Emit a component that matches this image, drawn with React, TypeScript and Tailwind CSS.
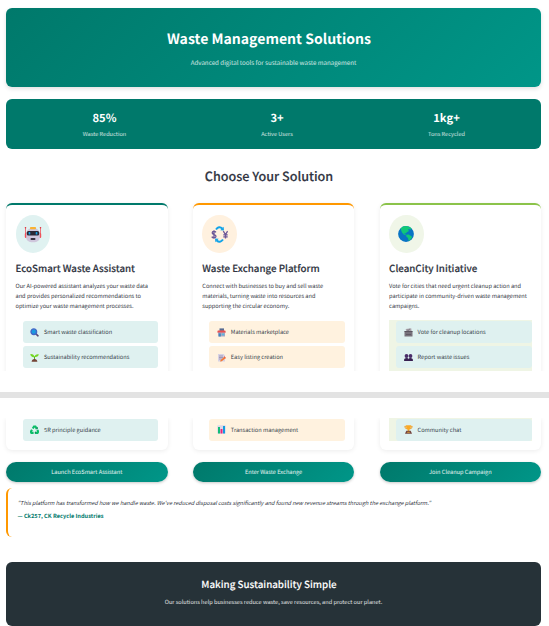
import type { ReactNode } from "react";

function Robot() {
  return (
    <svg viewBox="0 0 18 17" className="h-[17px] w-[18px]">
      <path d="M1.500 1v8M16.500 1v8" stroke="#f0525a" strokeWidth=".8" />
      <circle cx="1.500" cy="1.800" r=".8" fill="#d93a45" />
      <circle cx="16.500" cy="1.800" r=".8" fill="#d93a45" />
      <rect x="0.800" y="7" width="2.200" height="5" rx="1" fill="#f0525a" />
      <rect x="15" y="7" width="2.200" height="5" rx="1" fill="#f0525a" />
      <rect x="2.200" y="2.500" width="13.600" height="13.800" rx="5" fill="#cfc7dc" />
      <rect x="6" y="1" width="6" height="2.200" rx=".8" fill="#f9b233" />
      <rect x="2.800" y="5" width="12.400" height="4.600" rx="1.600" fill="#2b2834" />
      <rect x="4.600" y="6" width="1.700" height="2.600" rx=".7" fill="#12a2e6" />
      <rect x="11.700" y="6" width="1.700" height="2.600" rx=".7" fill="#12a2e6" />
      <rect x="6.500" y="12" width="5" height="2" rx=".9" fill="#37313f" />
    </svg>
  );
}

function Exchange() {
  return (
    <svg viewBox="0 0 17 17" className="h-[17px] w-[17px]" fill="none">
      <path d="M5 3.500Q8-.5 11.300 2.500" stroke="#11a3e8" strokeWidth="2" />
      <path d="M9.300 4.200 13 4.600 12.600.8z" fill="#11a3e8" />
      <path d="M12 13.500Q9 17.500 5.700 14.500" stroke="#11a3e8" strokeWidth="2" />
      <path d="M7.700 12.800 4 12.400l.4 3.800z" fill="#11a3e8" />
      <path d="M4.900 6.400C4.200 5 1.200 5 1.200 6.900c0 2 3.800 1.300 3.800 3.300 0 2-3.400 2-4.200.4M3 4.300v8.500" stroke="#6b5798" strokeWidth="1.300" />
      <path d="m12.300 5.200 2.200 3.400 2.100-3.400M14.500 8.500v4M12.300 8.900h4.400M12.300 10.900h4.400" stroke="#6b5798" strokeWidth="1.300" />
    </svg>
  );
}

function Globe() {
  return (
    <svg viewBox="0 0 16 16" className="h-4 w-4">
      <circle cx="8" cy="8" r="7.900" fill="#0874c4" />
      <path d="M2.700 2.200Q5-.2 8.500.1L12.700 1.600 13.500 3 12 3.700l-1-.9-.8 1 .8 1.200-2.200 1.200-.9 1.300L6.500 7l.2 1.300 1.600.5-.3.500L6 8.800 4 6.600 3 4z" fill="#10c878" />
      <path d="M8.200 8.700 10.600 8.400 13.600 10.200 14 11.300 12.800 13.200 11.300 14.800 10.500 14.400 10 12 8.400 10.700z" fill="#10c878" />
    </svg>
  );
}

type IconName = "search" | "plant" | "recycle" | "shop" | "memo" | "chart" | "ballot" | "people" | "trophy";

const drawings: Record<IconName, ReactNode> = {
  search: (
    <>
      <path d="m5.700 5.600 2.300 2.200" stroke="#5a4a72" strokeWidth="1.600" strokeLinecap="round" />
      <circle cx="3.800" cy="3.700" r="2.800" fill="#1a9be0" stroke="#4367c6" strokeWidth="1.400" />
    </>
  ),
  plant: (
    <>
      <path d="M4.500 7V3.500" stroke="#53b520" strokeWidth="1" />
      <path d="M4.500 4.100Q.8 4.600.3 1 3.900.6 4.500 4.100ZM4.500 3.900Q5 .7 8.800 1.200 8.200 4.500 4.500 3.900Z" fill="#75d725" />
      <path d="M1.600 8.800Q2 6 4.500 6T7.400 8.800Z" fill="#754336" />
    </>
  ),
  recycle: (
    <>
      <path d="M2.800 3.600 4 1.500h1.400l1.100 1.900M7.300 5l1 1.700-.8 1.200H5.500M3.600 7.900H1.400L.8 6.700 2 4.800" fill="none" stroke="#0bbd68" strokeWidth="2.100" />
      <path d="m5.300 4.200 2.500.1.100-2.500zM6 6.200 4.300 7.900 6 9z" fill="#078f57" />
    </>
  ),
  shop: (
    <>
      <rect x="2.500" y=".4" width="4.500" height="2.500" fill="#586a91" />
      <rect x="1" y="4" width="7" height="4.500" fill="#aaa5c3" />
      <path d="M.8 2.600h7.400l.8 2H.2z" fill="#e95050" />
      <rect x="1.800" y="5.400" width="2" height="3.100" fill="#3d87be" />
      <rect x="5" y="5.600" width="2.300" height="1.700" fill="#58b8df" />
    </>
  ),
  memo: (
    <>
      <path d="M1 1h5.500L8 2.500v6H1z" fill="#d7d2e4" />
      <path d="M2 3h4M2 4.500h4M2 6h3" stroke="#8b83a5" strokeWidth=".7" />
      <path d="m3.500 7.300 4-3.700 1.300 1.300-4 3.300-1.700.3z" fill="#f47936" />
      <path d="m7.300 3.800 1.200 1.100" stroke="#df4458" strokeWidth="1" />
    </>
  ),
  chart: (
    <>
      <rect x=".3" y=".3" width="8.400" height="8.400" rx=".7" fill="#dcd7e8" />
      <rect x="1" y="2" width="2" height="6.500" fill="#12bd77" />
      <rect x="3.500" y="4" width="2" height="4.500" fill="#eb2878" />
      <rect x="6" y="1" width="2" height="7.500" fill="#129bdf" />
    </>
  ),
  ballot: (
    <>
      <path d="M.5 3h8v5.500h-8z" fill="#77717b" />
      <path d="m1.700 1 5.500-.7.400 3H2.200z" fill="#aaa4ac" />
      <path d="M.5 3h8v.8h-8z" fill="#514b57" />
      <path d="m3.200 1.900.8.700L5.800 1M2 6.500h5" fill="none" stroke="#514b57" strokeWidth=".6" />
    </>
  ),
  people: (
    <>
      <circle cx="2.500" cy="3" r="1.900" fill="#4a2d69" />
      <circle cx="6.500" cy="3" r="1.900" fill="#4a2d69" />
      <path d="M.1 8V6.500Q.3 4.900 2.500 4.900T4.500 6.300Q4.500 4.900 6.500 4.900T8.900 6.500V8z" fill="#382051" />
    </>
  ),
  trophy: (
    <>
      <path d="M2 1.300H.8q0 2.500 2.200 2.500M7 1.300h1.200Q8.200 3.800 6 3.800" fill="none" stroke="#ed9b25" strokeWidth=".9" />
      <path d="M2 .2h5Q7 4 5.300 4.700V6H3.700V4.700Q2 4 2 .2Z" fill="#faa927" />
      <path d="M2.300 5.700h4.400l1.300 3.100H1z" fill="#75453f" />
      <path d="M3.200 7.300h2.600" stroke="#efb136" strokeWidth=".8" />
    </>
  ),
};

type Tone = "teal" | "orange" | "green";

function Feature({ icon, label, tone }: { icon: IconName; label: string; tone: Tone }) {
  return (
    <li className={`flex h-[22px] items-center rounded-[3px] pl-[7.500px] ${tone === "orange" ? "bg-[#fff2df]" : "bg-[#dff1f0]"}`}>
      <svg viewBox="0 0 9 9" className="h-[9px] w-[9px] shrink-0">{drawings[icon]}</svg>
      <span className="ml-[5px] whitespace-nowrap text-[5.650px] leading-[10px] text-[#37434b]">{label}</span>
    </li>
  );
}

interface Solution {
  title: string;
  lines: string[];
  tone: Tone;
  icon: ReactNode;
  features: [IconName, string][];
  action: string;
}

const solutions: Solution[] = [
  {
    title: "EcoSmart Waste Assistant",
    lines: ["Our AI-powered assistant analyzes your waste data", "and provides personalized recommendations to", "optimize your waste management processes."],
    tone: "teal",
    icon: <Robot />,
    features: [["search", "Smart waste classification"], ["plant", "Sustainability recommendations"], ["recycle", "5R principle guidance"]],
    action: "Launch EcoSmart Assistant",
  },
  {
    title: "Waste Exchange Platform",
    lines: ["Connect with businesses to buy and sell waste", "materials, turning waste into resources and", "supporting the circular economy."],
    tone: "orange",
    icon: <Exchange />,
    features: [["shop", "Materials marketplace"], ["memo", "Easy listing creation"], ["chart", "Transaction management"]],
    action: "Enter Waste Exchange",
  },
  {
    title: "CleanCity Initiative",
    lines: ["Vote for cities that need urgent cleanup action and", "participate in community-driven waste management", "campaigns."],
    tone: "green",
    icon: <Globe />,
    features: [["ballot", "Vote for cleanup locations"], ["people", "Report waste issues"], ["trophy", "Community chat"]],
    action: "Join Cleanup Campaign",
  },
];

const topBorder: Record<Tone, string> = {
  teal: "border-[#00796b]",
  orange: "border-[#ff9800]",
  green: "border-[#8bc34a]",
};

const iconBackground: Record<Tone, string> = {
  teal: "bg-[#e0f2f1]",
  orange: "bg-[#fff1df]",
  green: "bg-[#f0f6e8]",
};

function CardTop({ item }: { item: Solution }) {
  return (
    <article className={`h-[180px] w-[161.500px] rounded-t-[6px] border-t-2 bg-white px-[9.500px] pt-[10px] shadow-[0_1px_5px_rgba(0,0,0,0.07)] ${topBorder[item.tone]}`}>
      <div className={`flex h-[38px] w-[34.500px] items-center justify-center rounded-[50%] ${iconBackground[item.tone]}`}>{item.icon}</div>
      <h3 className="mt-[7px] whitespace-nowrap text-[9.750px] leading-[16px] font-medium text-[#303441] [-webkit-text-stroke:0.15px_#303441]">{item.title}</h3>
      <div className="mt-[5px] whitespace-nowrap text-[5.650px] leading-[10px] text-[#343843]">
        {item.lines.map((line) => <p key={line}>{line}</p>)}
      </div>
      <ul className={`mt-[9px] flex h-[60px] flex-col gap-[3px] pt-[1px] pl-[7px] ${item.tone === "green" ? "bg-[#eff5e5]" : ""}`}>
        {item.features.slice(0, 2).map(([icon, label]) => <Feature key={label} icon={icon} label={label} tone={item.tone} />)}
      </ul>
    </article>
  );
}

function Stat({ value, label, width }: { value: string; label: string; width: string }) {
  return (
    <div className={`text-center text-white ${width}`}>
      <strong className="block text-[11.200px] leading-[15px]">{value}</strong>
      <span className="mt-[2px] block text-[5.600px] leading-[12px] text-white/80">{label}</span>
    </div>
  );
}

export default function App() {
  return (
    <main className="h-[626px] w-[549px] overflow-hidden bg-white font-['Noto_Sans_CJK_SC','Noto_Sans',sans-serif] [text-rendering:geometricPrecision]">
      <section className="h-[371px] overflow-hidden px-[6px] pt-[8px]">
        <header className="h-[79px] w-[535px] rounded-[6px] bg-linear-135 from-[#00796b] to-[#009688] pt-[20px] text-center text-white shadow-[0_2px_4px_rgba(0,0,0,0.12)]">
          <h1 className="w-[526px] text-[14.050px] leading-[22px] font-bold">Waste Management Solutions</h1>
          <p className="mt-[7px] text-[6.200px] leading-[12px] text-white/80">Advanced digital tools for sustainable waste management</p>
        </header>
        <div className="mt-[12px] flex h-[50px] w-[535px] rounded-[6px] bg-[#00796b] pt-[12px] pl-[13px]">
          <Stat value="85%" label="Waste Reduction" width="w-[171px]" />
          <Stat value="3+" label="Active Users" width="w-[174px]" />
          <Stat value="1kg+" label="Tons Recycled" width="w-[165px]" />
        </div>
        <h2 className="mt-[17px] w-[526px] text-center text-[12.600px] leading-[20px] font-medium text-[#303441] [-webkit-text-stroke:0.15px_#303441]">Choose Your Solution</h2>
        <div className="mt-[17px] flex gap-[25.300px]">
          {solutions.map((item) => <CardTop key={item.title} item={item} />)}
        </div>
      </section>

      <div className="mt-[21px] h-[6px] bg-[#e3e3e3]" />

      <section className="mt-[20px] px-[6px]">
        <div className="-mx-[6px] flex h-[38px] gap-[25.300px] overflow-hidden px-[6px]">
          {solutions.map((item) => (
            <div key={item.title} className="h-[32px] w-[161.500px] rounded-b-[6px] bg-white px-[9.500px] shadow-[0_1px_5px_rgba(0,0,0,0.08)]">
              <ul className={`pt-[0.500px] pl-[7px] ${item.tone === "green" ? "bg-[#eff5e5]" : ""}`}>
                <Feature icon={item.features[2][0]} label={item.features[2][1]} tone={item.tone} />
              </ul>
            </div>
          ))}
        </div>
        <div className="mt-[6px] flex gap-[25.300px]">
          {solutions.map((item) => (
            <button key={item.action} className="h-[20px] w-[161.500px] rounded-full bg-linear-135 from-[#00796b] to-[#009688] text-[5.650px] leading-[20px] text-white/90 shadow-[0_1px_3px_rgba(0,0,0,0.22)] [text-rendering:geometricPrecision]">{item.action}</button>
          ))}
        </div>
        <blockquote className="mt-[6px] h-[49px] w-[535px] rounded-[6px] border-l-2 border-[#ff9800] pt-[10px] pl-[9.500px] text-[5.650px] leading-[10px]">
          <p className="whitespace-nowrap text-[5.510px] text-[#303441] italic">"This platform has transformed how we handle waste. We've reduced disposal costs significantly and found new revenue streams through the exchange platform."</p>
          <p className="mt-[3px] font-bold text-[#00796b]">— Ck257, CK Recycle Industries</p>
        </blockquote>
      </section>

      <footer className="mx-[6px] mt-[24.500px] h-[64.500px] w-[535px] rounded-[6px] bg-[#263238] pt-[13.500px] text-center text-white">
        <h2 className="w-[526px] text-[9.800px] leading-[18px] font-medium [-webkit-text-stroke:0.1px_white]">Making Sustainability Simple</h2>
        <p className="mt-[4px] text-[5.620px] leading-[10px] text-white/85">Our solutions help businesses reduce waste, save resources, and protect our planet.</p>
      </footer>
    </main>
  );
}
